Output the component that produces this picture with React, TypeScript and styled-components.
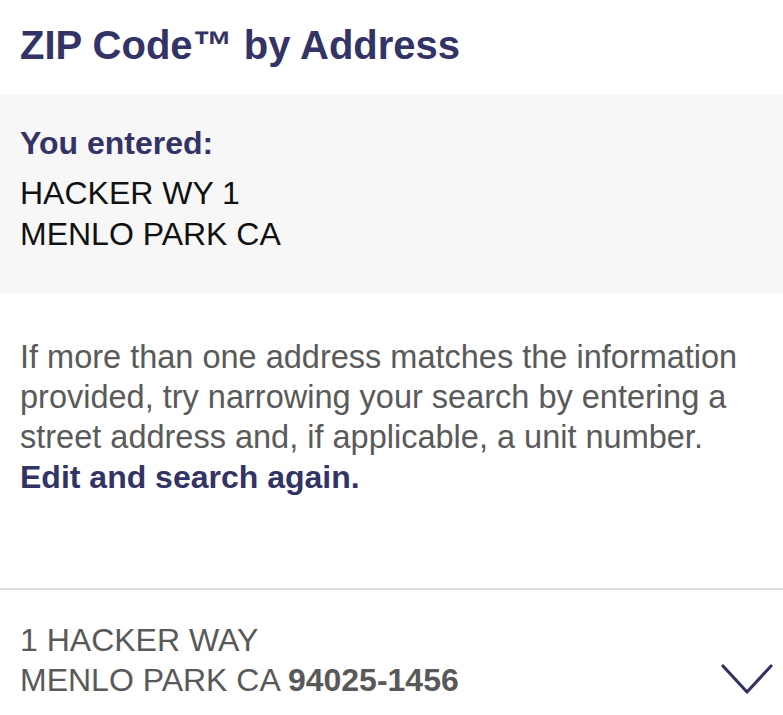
import React from "react";
import styled, { createGlobalStyle } from "styled-components";

const Global = createGlobalStyle`
  html, body { margin: 0; padding: 0; background: #ffffff; }
  body { font-family: "Liberation Sans", Arial, Helvetica, sans-serif; -webkit-font-smoothing: antialiased; }
  * { box-sizing: border-box; }
`;

const Page = styled.div`
  width: 783px;
  height: 715px;
  overflow: hidden;
  display: flex;
  flex-direction: column;
`;

const Header = styled.header`
  height: 95px;
  padding: 0 20px 4px;
  display: flex;
  align-items: center;
`;

const Title = styled.h1`
  margin: 0;
  font-size: 40px;
  font-weight: 700;
  color: #333366;
  letter-spacing: 0;
`;

const EnteredBox = styled.section`
  background: #f7f7f7;
  height: 198px;
  padding: 28px 20px 0;
`;

const Label = styled.div`
  font-size: 32px;
  font-weight: 700;
  color: #333366;
  line-height: 40px;
  margin-bottom: 10px;
`;

const AddressLine = styled.div`
  font-size: 32px;
  color: #111111;
  line-height: 41px;
`;

const Info = styled.section`
  padding: 44px 20px 0;
  height: 297px;
  border-bottom: 2px solid #dcdcdc;
`;

const Paragraph = styled.p`
  margin: 0;
  font-size: 32.5px;
  line-height: 40px;
  color: #5a5a5a;
`;

const EditLink = styled.a`
  display: block;
  color: #333366;
  font-size: 32px;
  font-weight: 700;
  text-decoration: none;
`;

const Result = styled.div`
  display: flex;
  align-items: flex-end;
  justify-content: space-between;
  padding: 30px 10px 0 20px;
`;

const ResultText = styled.div`
  font-size: 32px;
  line-height: 40px;
  color: #595959;
`;

const Zip = styled.strong`
  font-weight: 700;
`;

const Chevron = styled.svg`
  width: 52px;
  height: 32px;
  margin-bottom: 4px;
`;

export default function App() {
  return (
    <Page>
      <Global />
      <Header>
        <Title>ZIP Code™ by Address</Title>
      </Header>
      <EnteredBox>
        <Label>You entered:</Label>
        <AddressLine>HACKER WY 1</AddressLine>
        <AddressLine>MENLO PARK CA</AddressLine>
      </EnteredBox>
      <Info>
        <Paragraph>
          If more than one address matches the information provided, try narrowing your search by entering a
          street address and, if applicable, a unit number.
          <EditLink href="#">Edit and search again.</EditLink>
        </Paragraph>
      </Info>
      <Result>
        <ResultText>
          <div>1 HACKER WAY</div>
          <div>
            MENLO PARK CA <Zip>94025-1456</Zip>
          </div>
        </ResultText>
        <Chevron viewBox="0 0 52 32" fill="none">
          <path d="M2 2 L26 28 L50 2" stroke="#333366" strokeWidth="3.2" strokeLinecap="round" strokeLinejoin="round" />
        </Chevron>
      </Result>
    </Page>
  );
}
